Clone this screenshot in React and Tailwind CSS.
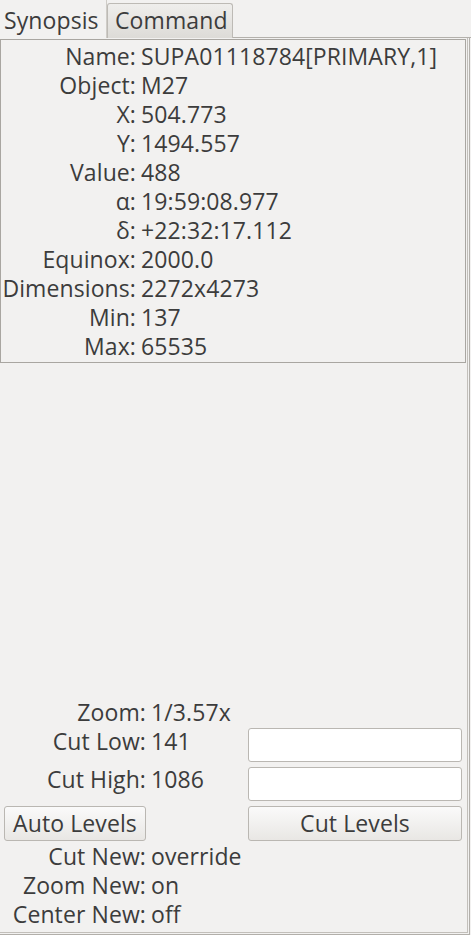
const synopsis = [
  ["Name:", "SUPA01118784[PRIMARY,1]"],
  ["Object:", "M27"],
  ["X:", "504.773"],
  ["Y:", "1494.557"],
  ["Value:", "488"],
  ["α:", "19:59:08.977"],
  ["δ:", "+22:32:17.112"],
  ["Equinox:", "2000.0"],
  ["Dimensions:", "2272x4273"],
  ["Min:", "137"],
  ["Max:", "65535"],
]

const settings = [
  ["Cut New:", "override"],
  ["Zoom New:", "on"],
  ["Center New:", "off"],
]

function Row({ label, value, labelW }) {
  return (
    <div className="flex h-[29px] items-center">
      <span className={`${labelW} shrink-0 text-right whitespace-nowrap`}>{label}</span>
      <span className="pl-[5px] whitespace-nowrap">{value}</span>
    </div>
  )
}

export default function App() {
  return (
    <div className="w-[471px] h-[935px] bg-[#f2f1f0] flex flex-col text-[#3c3c3c] text-[23px] leading-[29px] tracking-[0.1px] font-['Open_Sans',sans-serif]">
      <div className="flex items-end h-[38px] shrink-0">
        <div className="w-[107px] h-[38px] border-r border-[#cfccc7] pl-[4px] leading-[40px]">Synopsis</div>
        <div className="w-[126px] h-[35px] border border-b-0 border-[#bdbab5] rounded-t-[3px] bg-gradient-to-b from-[#efeeec] to-[#dddbd7] pl-[7px] leading-[33px]">
          Command
        </div>
        <div className="flex-1 h-[1px] bg-[#b4b1ac]" />
      </div>

      <div className="flex-1 border-r border-b border-[#b2afaa] pr-[1px] pb-[1px] w-[470px]">
        <div className="h-full border-r border-b border-[#c2bfba] flex flex-col justify-between">
          <div className="mt-[1px] w-[466px] h-[324px] border border-[#a9a6a1] pt-[2px]">
            {synopsis.map(([l, v]) => (
              <Row key={l} label={l} value={v} labelW="w-[135px]" />
            ))}
          </div>

          <div className="flex flex-col pb-[3px]">
            <Row label="Zoom:" value="1/3.57x" labelW="w-[146px]" />
            <div className="flex h-[34px] mt-[1px]">
              <span className="w-[146px] text-right leading-[26px]">Cut Low:</span>
              <span className="w-[102px] pl-[5px] leading-[26px]">141</span>
              <div className="w-[214px] h-[34px] bg-white border border-[#bab7b2] rounded-[3px]" />
            </div>
            <div className="flex h-[34px] mt-[5px]">
              <span className="w-[146px] text-right leading-[24px]">Cut High:</span>
              <span className="w-[102px] pl-[5px] leading-[24px]">1086</span>
              <div className="w-[214px] h-[34px] bg-white border border-[#bab7b2] rounded-[3px]" />
            </div>
            <div className="flex h-[35px] mt-[5px]">
              <div className="ml-[4px] w-[142px] h-[35px] border border-[#bab7b2] rounded-[3px] bg-gradient-to-b from-[#fafafa] to-[#e9e7e4] text-center leading-[33px]">
                Auto Levels
              </div>
              <div className="w-[102px]" />
              <div className="w-[214px] h-[35px] border border-[#bab7b2] rounded-[3px] bg-gradient-to-b from-[#fafafa] to-[#e9e7e4] text-center leading-[33px]">
                Cut Levels
              </div>
            </div>
            <div className="mt-[1px]">
              {settings.map(([l, v]) => (
                <Row key={l} label={l} value={v} labelW="w-[146px]" />
              ))}
            </div>
          </div>
        </div>
      </div>
    </div>
  )
}
